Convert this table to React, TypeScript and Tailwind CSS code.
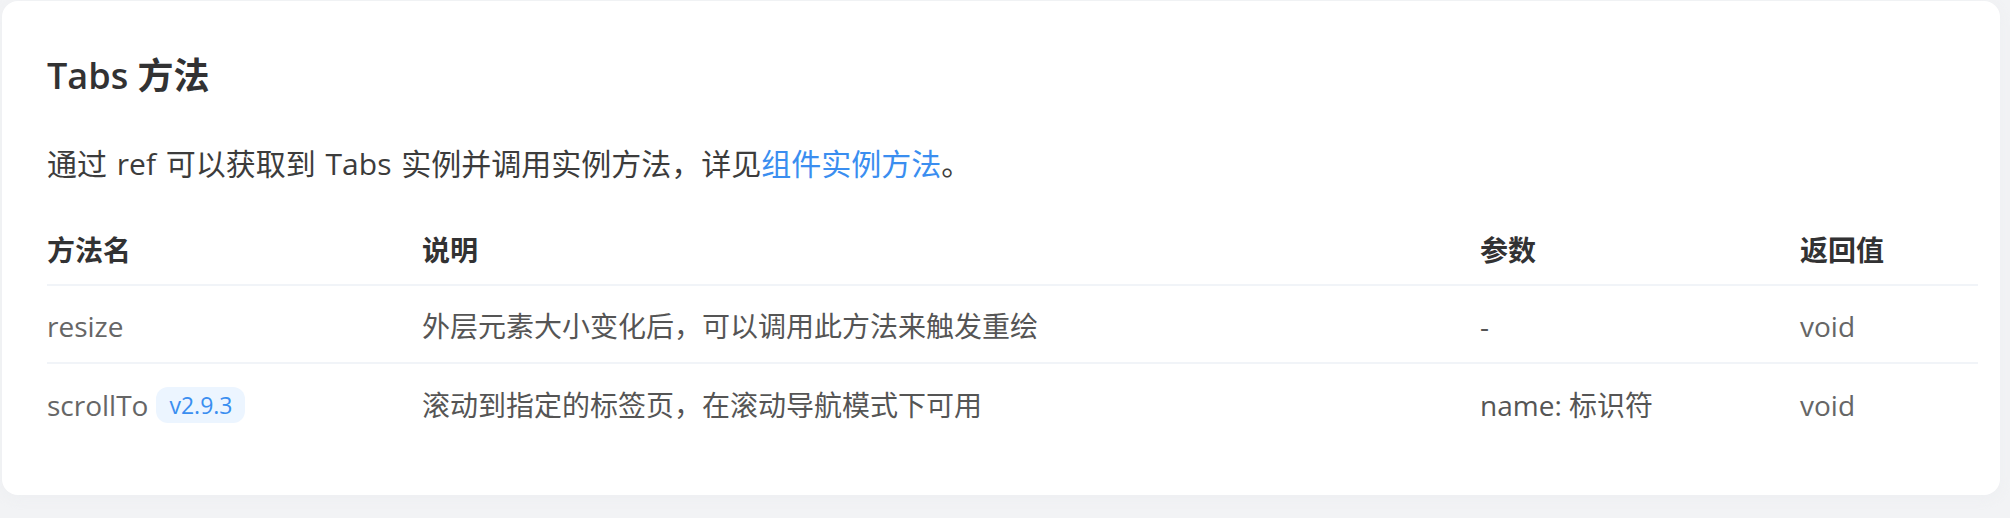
import React from 'react'

const FONT = '"Open Sans", "Noto Sans CJK SC", sans-serif'

const ROWS: { name: string; tag?: string; desc: string; params: string; ret: string }[] = [
  {
    name: 'resize',
    desc: '外层元素大小变化后，可以调用此方法来触发重绘',
    params: '-',
    ret: 'void',
  },
  {
    name: 'scrollTo',
    tag: 'v2.9.3',
    desc: '滚动到指定的标签页，在滚动导航模式下可用',
    params: 'name: 标识符',
    ret: 'void',
  },
]

export default function App() {
  return (
    <div className="min-h-[518px] w-[2010px] bg-[#f2f3f5] pt-px" style={{ fontFamily: FONT }}>
      <div className="ml-[2px] w-[1998px] rounded-2xl bg-white pt-[50px] pb-[53px] pl-[45px] pr-[20px] shadow-[0_4px_12px_rgba(235,237,240,0.6)]">
        {/* Title */}
        <h3 className="text-[36px] leading-[50px] font-semibold text-[#323233]">Tabs 方法</h3>

        {/* Intro */}
        <p className="mt-[41px] text-[30px] leading-[44px] text-[#3c3c3c] [word-spacing:2px]">
          通过 ref 可以获取到 Tabs 实例并调用实例方法，详见
          <span className="text-[#3a8ef0]">组件实例方法</span>。
        </p>

        {/* Table */}
        <div className="mt-[30px] w-[1931px]">
          <div className="grid h-[70px] grid-cols-[375px_1058px_320px_1fr] items-center border-b-2 border-[#f1f4f8] text-[28px] font-semibold text-[#323233]">
            <div>方法名</div>
            <div>说明</div>
            <div>参数</div>
            <div>返回值</div>
          </div>
          {ROWS.map((row, i) => (
            <div
              key={row.name}
              className={`grid h-[78px] grid-cols-[375px_1058px_320px_1fr] items-center pt-[3px] text-[28px] text-[#555] ${
                i < ROWS.length - 1 ? 'border-b-2 border-[#f1f4f8]' : ''
              }`}
            >
              <div className="flex items-center gap-[8px] text-[#666]">
                <span>{row.name}</span>
                {row.tag && (
                  <span className="rounded-[12px] bg-[#ecf5ff] px-[13px] text-[23px] leading-[36px] text-[#3a8ef0]">
                    {row.tag}
                  </span>
                )}
              </div>
              <div>{row.desc}</div>
              <div>{row.params}</div>
              <div className="text-[#666]">{row.ret}</div>
            </div>
          ))}
        </div>
      </div>
    </div>
  )
}
